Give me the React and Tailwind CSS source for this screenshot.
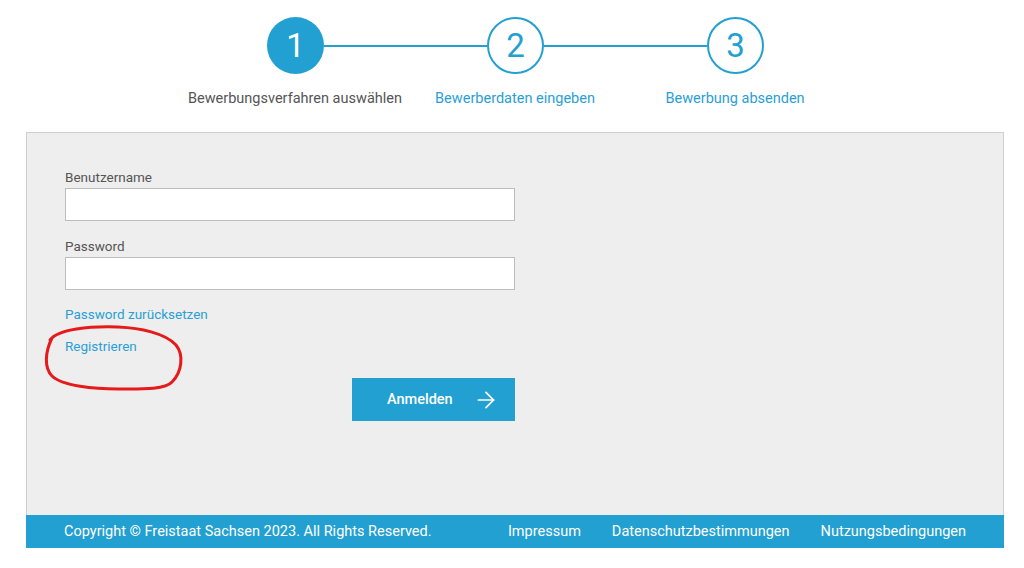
import { ArrowRight } from "lucide-react";

function StepCircle({ n, active }) {
  return (
    <div
      className={
        "w-[57px] h-[57px] rounded-full flex items-center justify-center text-[33px] font-normal leading-none shrink-0 " +
        (active
          ? "bg-[#22a0d2] text-white"
          : "bg-white border-2 border-[#22a0d2] text-[#22a0d2]")
      }
    >
      {n}
    </div>
  );
}

export default function App() {
  return (
    <div className="relative w-[1024px] h-[568px] bg-white font-['Roboto',sans-serif] overflow-hidden">
      {/* Steps */}
      <div className="flex items-center ml-[267px] pt-[17px]">
        <StepCircle n="1" active />
        <div className="w-[163px] h-[2px] bg-[#22a0d2]" />
        <StepCircle n="2" />
        <div className="w-[163px] h-[2px] bg-[#22a0d2]" />
        <StepCircle n="3" />
      </div>
      <div className="flex ml-[185px] mt-[15px] text-[14.5px] leading-5">
        <div className="w-[220px] text-center text-[#555]">Bewerbungsverfahren auswählen</div>
        <div className="w-[220px] text-center text-[#2a9fd6]">Bewerberdaten eingeben</div>
        <div className="w-[220px] text-center text-[#2a9fd6]">Bewerbung absenden</div>
      </div>

      {/* Panel */}
      <div className="mx-[26px] w-[978px] mt-[23px] bg-[#eeeeee] border border-b-0 border-[#cfcfcf] h-[383px] pt-[34px] pl-[38px]">
        <div className="w-[450px] flex flex-col text-[13.5px] leading-5">
          <label className="text-[#555]">Benutzername</label>
          <input className="mt-px h-[33px] bg-white border border-[#bdbdbd] outline-none" />
          <label className="mt-[15px] text-[#555]">Password</label>
          <input type="password" className="mt-px h-[33px] bg-white border border-[#bdbdbd] outline-none" />
          <a className="mt-[14px] text-[#2a9fd6]">Password zurücksetzen</a>
          <a className="mt-[12px] text-[#2a9fd6]">Registrieren</a>
          <div className="flex justify-end mt-[22px]">
            <button className="w-[163px] h-[43px] bg-[#22a0d2] text-white text-[14.5px] font-medium flex items-center pl-[35px] gap-[20px]">
              Anmelden
              <ArrowRight size={26} strokeWidth={1.6} />
            </button>
          </div>
        </div>
      </div>

      {/* Footer */}
      <div className="mx-[26px] w-[978px] h-[33px] bg-[#22a0d2] text-white text-[14.5px] flex items-center justify-between pl-[38px] pr-[38px]">
        <span>Copyright © Freistaat Sachsen 2023. All Rights Reserved.</span>
        <div className="flex gap-[31px]">
          <a>Impressum</a>
          <a>Datenschutzbestimmungen</a>
          <a>Nutzungsbedingungen</a>
        </div>
      </div>

      {/* red hand-drawn annotation */}
      <svg className="absolute left-0 top-0 pointer-events-none" width="1024" height="568" viewBox="0 0 1024 568">
        <path
          d="M 50 340 C 58 329, 90 326, 118 327 C 140 328, 165 333, 176 345 C 184 355, 182 372, 172 382 C 165 390, 140 389, 118 389 C 95 389, 62 386, 52 376 C 44 368, 45 352, 52 338"
          fill="none"
          stroke="#e51a1a"
          strokeWidth="3"
          strokeLinecap="round"
        />
      </svg>
    </div>
  );
}
